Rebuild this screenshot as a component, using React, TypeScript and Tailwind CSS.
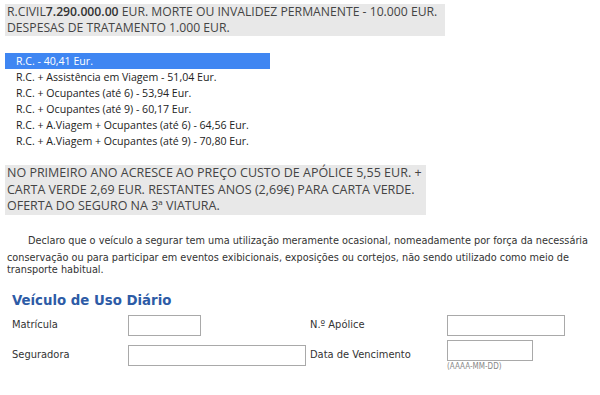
import React from 'react'

const options = [
  'R.C. - 40,41 Eur.',
  'R.C. + Assistência em Viagem - 51,04 Eur.',
  'R.C. + Ocupantes (até 6) - 53,94 Eur.',
  'R.C. + Ocupantes (até 9) - 60,17 Eur.',
  'R.C. + A.Viagem + Ocupantes (até 6) - 64,56 Eur.',
  'R.C. + A.Viagem + Ocupantes (até 9) - 70,80 Eur.',
]

const inputCls = 'h-[21px] border border-[#a9a9a9] bg-white'

export default function App() {
  return (
    <div className="w-[600px] h-[395px] bg-white overflow-hidden pt-[4px]">
      <div className="ml-[5px] w-[440px] bg-[#e8e8e8] px-[2px] text-[12.2px] leading-[16px] text-[#444] font-['Open_Sans',sans-serif] whitespace-nowrap">
        <p>
          R.CIVIL<b className="font-semibold text-[#333]">7.290.000.00</b> EUR. MORTE OU INVALIDEZ PERMANENTE - 10.000 EUR.
        </p>
        <p>DESPESAS DE TRATAMENTO 1.000 EUR.</p>
      </div>

      <div className="mt-[17px] ml-[5px] w-[265px] text-[10.6px] leading-[16px] text-[#222] font-['Open_Sans',sans-serif]">
        {options.map((o, i) => (
          <div key={o} className={i === 0 ? 'pl-[11px] bg-[#3f86f2] text-white' : 'pl-[11px]'}>
            {o}
          </div>
        ))}
      </div>

      <div className="mt-[16px] ml-[5px] w-[421px] bg-[#e8e8e8] px-[2px] text-[12.5px] leading-[16.5px] text-[#444] font-['Open_Sans',sans-serif] whitespace-nowrap">
        <p>NO PRIMEIRO ANO ACRESCE AO PREÇO CUSTO DE APÓLICE 5,55 EUR. +</p>
        <p>CARTA VERDE 2,69 EUR. RESTANTES ANOS (2,69€) PARA CARTA VERDE.</p>
        <p>OFERTA DO SEGURO NA 3ª VIATURA.</p>
      </div>

      <div className="mt-[17px] pl-[7px] pr-[2px] text-[10.8px] text-[#333] font-['DejaVu_Sans_Condensed','DejaVu_Sans',sans-serif]">
        <p className="pl-[21px] leading-[17px] whitespace-nowrap">
          Declaro que o veículo a segurar tem uma utilização meramente ocasional, nomeadamente por força da necessária
        </p>
        <p className="leading-[12px] mt-[3px]">
          conservação ou para participar em eventos exibicionais, exposições ou cortejos, não sendo utilizado como meio de
          <br />
          transporte habitual.
        </p>
      </div>

      <h2 className="mt-[15px] ml-[12px] text-[14.8px] leading-[18px] font-bold text-[#2d5ba6] font-['DejaVu_Sans_Condensed','DejaVu_Sans',sans-serif]">
        Veículo de Uso Diário
      </h2>

      <div className="mt-[6px] pl-[12px] grid grid-cols-[116px_182px_137px_1fr] gap-y-[4px] items-center text-[11px] text-[#333] font-['DejaVu_Sans_Condensed','DejaVu_Sans',sans-serif]">
        <span>Matrícula</span>
        <div className={`${inputCls} w-[73px]`} />
        <span>N.º Apólice</span>
        <div className={`${inputCls} w-[118px]`} />

        <span>Seguradora</span>
        <div className={`${inputCls} w-[178px] h-[20px]`} />
        <span>Data de Vencimento</span>
        <div className="flex flex-col">
          <div className={`${inputCls} w-[86px] h-[20px]`} />
          <span className="mt-[1px] text-[8px] leading-[10px] text-[#888]">(AAAA-MM-DD)</span>
        </div>
      </div>
    </div>
  )
}
